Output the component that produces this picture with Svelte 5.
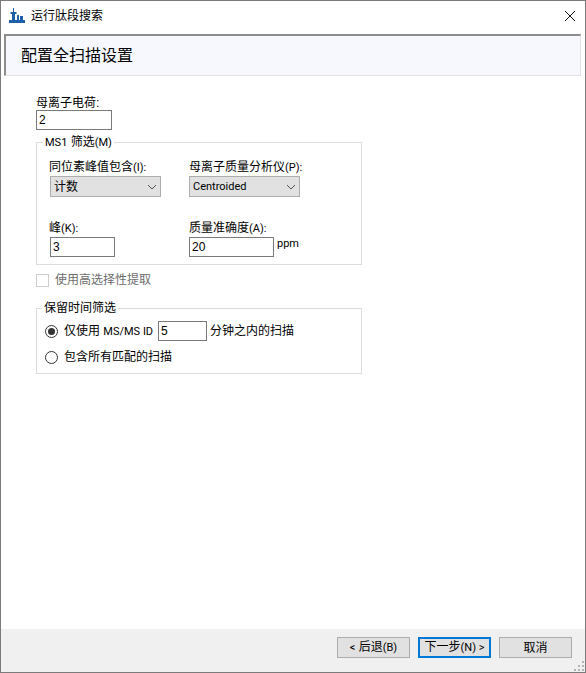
<script lang="ts">
    let mode = $state("within")
    const chevron = "M1 1 L5 5 L9 1"
</script>

<div class="window">
    <div class="titlebar">
        <svg class="appIcon" width="16" height="16" viewBox="0 0 16 16">
            <path fill="#1f5fa8" d="M0 12h16v3H0zM4 0h1v4h2.5v2H6v6H3V6H1.5V4H4zM8 7h2v5H8zM11 8h3v4h-3z" />
        </svg>
        <span class="titleText">运行肽段搜索</span>
        <svg class="close" width="12" height="12" viewBox="0 0 12 12">
            <path d="M1 1 L11 11 M11 1 L1 11" stroke="#111" stroke-width="1" fill="none" />
        </svg>
    </div>

    <div class="header">配置全扫描设置</div>

    <div class="content">
        <label class="stacked">
            <span class="label">母离子电荷:</span>
            <input class="text charge" value="2" />
        </label>

        <fieldset class="ms1">
            <legend><span class="lat">MS1</span> 筛选<span class="lat">(M)</span></legend>
            <div class="grid">
                <div class="field">
                    <span class="label shift">同位素峰值包含<span class="lat">(I):</span></span>
                    <div class="select">
                        <span>计数</span>
                        <svg width="10" height="6" viewBox="0 0 10 6"><path d={chevron} stroke="#555" fill="none" /></svg>
                    </div>
                </div>
                <div class="field">
                    <span class="label">母离子质量分析仪<span class="lat">(P):</span></span>
                    <div class="select">
                        <span class="lat">Centroided</span>
                        <svg width="10" height="6" viewBox="0 0 10 6"><path d={chevron} stroke="#555" fill="none" /></svg>
                    </div>
                </div>
                <div class="field">
                    <span class="label shift">峰<span class="lat">(K):</span></span>
                    <input class="text peaks" value="3" />
                </div>
                <div class="field">
                    <span class="label">质量准确度<span class="lat">(A):</span></span>
                    <div class="row">
                        <input class="text accuracy" value="20" />
                        <span class="unit lat">ppm</span>
                    </div>
                </div>
            </div>
        </fieldset>

        <div class="check">
            <span class="box"></span>
            <span>使用高选择性提取</span>
        </div>

        <fieldset class="rt">
            <legend>保留时间筛选</legend>
            <div class="radioRow first">
                <button class="radio" class:on={mode == "within"} aria-label="within" onclick={() => mode = "within"}></button>
                <span>仅使用 <span class="lat">MS/MS ID</span></span>
                <input class="text minutes" value="5" />
                <span>分钟之内的扫描</span>
            </div>
            <div class="radioRow">
                <button class="radio" class:on={mode == "all"} aria-label="all" onclick={() => mode = "all"}></button>
                <span>包含所有匹配的扫描</span>
            </div>
        </fieldset>
    </div>

    <div class="footer">
        <button class="btn"><span class="lat">&lt;</span> 后退<span class="lat">(B)</span></button>
        <button class="btn primary">下一步<span class="lat">(N) &gt;</span></button>
        <button class="btn cancel">取消</button>
        <svg class="grip" width="11" height="11" viewBox="0 0 11 11">
            <path fill="#b4b4b4" d="M8 0h2v2H8zM4 4h2v2H4zM8 4h2v2H8zM0 8h2v2H0zM4 8h2v2H4zM8 8h2v2H8z" />
        </svg>
    </div>
</div>

<style>
    :global(body) {
        margin: 0;
        background: #fff;
    }
    .window {
        box-sizing: border-box;
        width: 586px;
        height: 673px;
        border: 1px solid #7b7b7b;
        display: flex;
        flex-direction: column;
        position: relative;
        font-family: "Liberation Sans", "Noto Sans CJK SC", sans-serif;
        font-size: 12px;
        line-height: 16px;
        color: #000;
        background: #fff;
    }
    .lat {
        font-family: Roboto, "Liberation Sans", sans-serif;
        font-size: 11px;
    }
    .titlebar {
        box-sizing: border-box;
        height: 33px;
        flex: none;
        display: flex;
        align-items: center;
        padding: 0 9px 3px 8px;
    }
    .appIcon {
        margin-right: 6px;
    }
    .close {
        margin-left: auto;
    }
    .header {
        flex: none;
        box-sizing: border-box;
        height: 42px;
        margin: 0 4px 0 3px;
        padding: 0 0 0 15px;
        display: flex;
        align-items: center;
        font-size: 16px;
        background: #f6f8fd;
        border-top: 2px solid #8c8c8c;
        border-left: 2px solid #8c8c8c;
        border-right: 1px solid #e3e3e3;
        border-bottom: 1px solid #e3e3e3;
    }
    .content {
        flex: 1;
        padding: 19px 0 0 35px;
    }
    .stacked, .field {
        display: flex;
        flex-direction: column;
        align-items: flex-start;
    }
    .label {
        height: 16px;
    }
    .stacked .label {
        margin-bottom: -1px;
    }
    .text {
        box-sizing: border-box;
        height: 20px;
        border: 1px solid #7a7a7a;
        padding: 0 0 0 2px;
        font: inherit;
        color: #000;
        background: #fff;
        outline: none;
    }
    .charge {
        width: 76px;
        display: block;
    }
    fieldset {
        box-sizing: border-box;
        width: 326px;
        margin: 0;
        border: 1px solid #dcdcdc;
        min-width: 0;
    }
    legend {
        padding: 0 2px;
        line-height: 14px;
    }
    .ms1 {
        height: 130px;
        margin-top: 5px;
        padding: 9px 0 0 13px;
    }
    .ms1 legend {
        margin-left: -7px;
    }
    .grid {
        display: grid;
        grid-template-columns: 139px 1fr;
        grid-auto-rows: 61px;
    }
    .field .label {
        margin-bottom: 1px;
    }
    .field .label.shift {
        margin-left: -1px;
    }
    .select {
        box-sizing: border-box;
        width: 111px;
        height: 21px;
        margin-top: 0;
        display: flex;
        align-items: center;
        justify-content: space-between;
        padding: 0 3px;
        background: #e1e1e1;
        border: 1px solid #adadad;
    }
    .peaks {
        width: 65px;
    }
    .accuracy {
        width: 85px;
    }
    .row {
        display: flex;
        align-items: flex-start;
    }
    .unit {
        margin: -1px 0 0 3px;
    }
    .check {
        display: flex;
        align-items: center;
        gap: 6px;
        height: 16px;
        margin-top: 7px;
        color: #6d6d6d;
    }
    .box {
        box-sizing: border-box;
        width: 13px;
        height: 13px;
        border: 1px solid #cccccc;
    }
    .rt {
        height: 73px;
        margin-top: 13px;
        padding: 6px 0 0 8px;
    }
    .rt legend {
        margin-left: -3px;
    }
    .radioRow {
        display: flex;
        align-items: center;
        height: 20px;
        margin-top: 6px;
    }
    .radioRow.first {
        margin-top: 0;
    }
    .radio {
        box-sizing: border-box;
        width: 13px;
        height: 13px;
        padding: 0;
        margin-right: 6px;
        border: 1px solid #333;
        border-radius: 50%;
        background: #fff;
        position: relative;
    }
    .radio.on::after {
        content: "";
        position: absolute;
        inset: 2px;
        border-radius: 50%;
        background: #333;
    }
    .minutes {
        width: 49px;
        margin: 0 3px 0 5px;
    }
    .footer {
        flex: none;
        height: 43px;
        box-sizing: border-box;
        background: #f0f0f0;
        display: flex;
        justify-content: flex-end;
        gap: 8px;
        padding: 8px 13px 0 0;
        position: relative;
    }
    .btn {
        box-sizing: border-box;
        width: 73px;
        height: 21px;
        padding: 0;
        font: inherit;
        color: #000;
        background: #e1e1e1;
        border: 1px solid #adadad;
    }
    .btn.primary {
        border: 2px solid #0078d7;
    }
    .grip {
        position: absolute;
        right: 0;
        bottom: 0;
    }
</style>
